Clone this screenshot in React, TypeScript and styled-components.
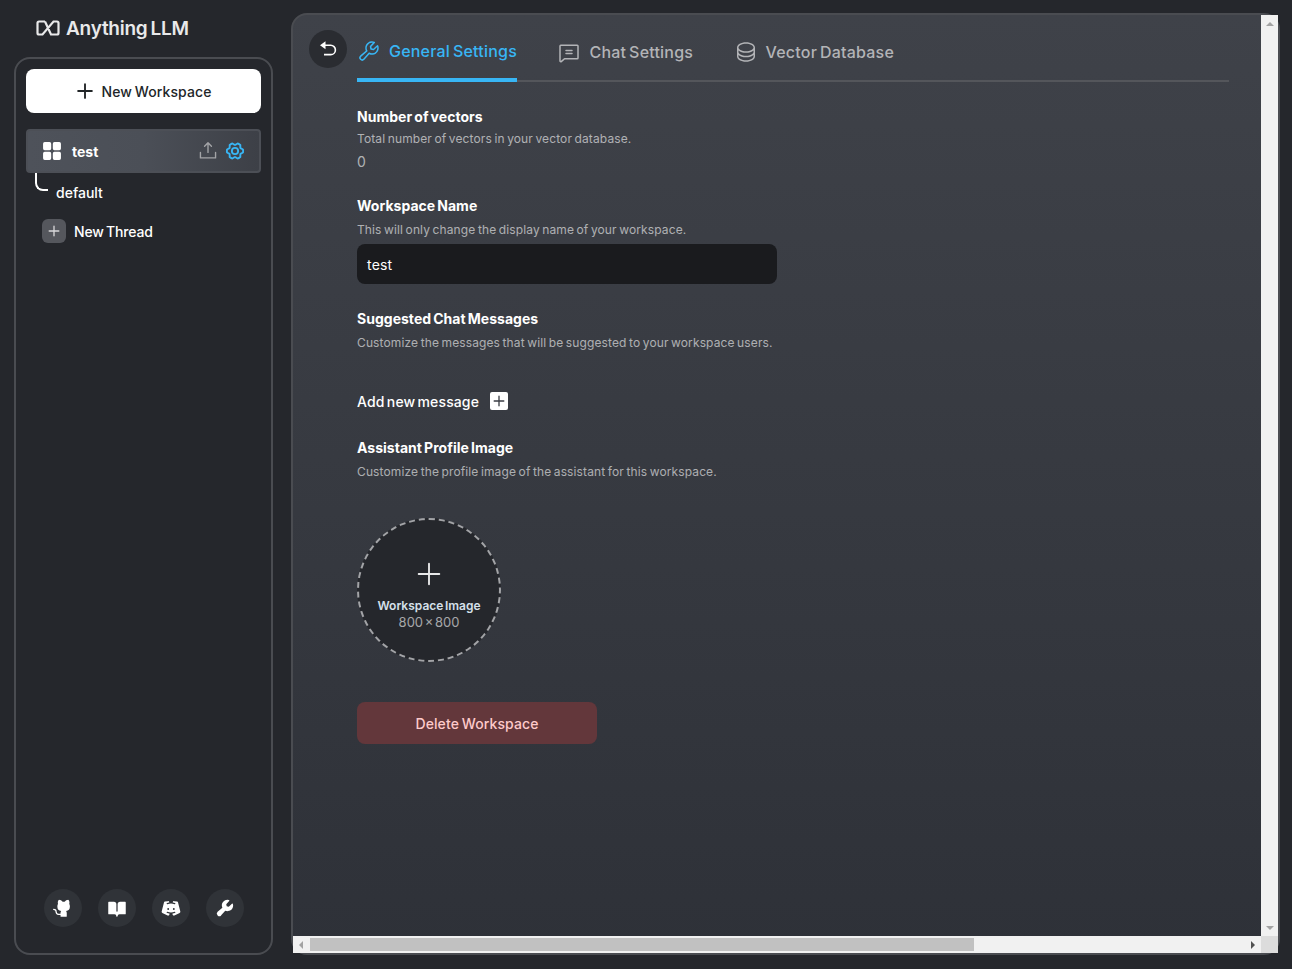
import React from "react";
import styled, { createGlobalStyle } from "styled-components";
import {
  PiBookOpenFill,
  PiChatText,
  PiDatabase,
  PiDiscordLogoFill,
  PiGearSixBold,
  PiGithubLogoFill,
  PiPlus,
  PiPlusBold,
  PiSquaresFourFill,
  PiUploadSimple,
  PiWrench,
  PiWrenchFill,
} from "react-icons/pi";

const Global = createGlobalStyle`
  * { box-sizing: border-box; }
  html, body { margin: 0; height: 100%; overflow: hidden; }
  body {
    background: #25272c;
    color: #fff;
    font-family: Inter, "Liberation Sans", sans-serif;
    word-spacing: -1.5px;
  }
`;

const Page = styled.div`
  display: flex;
  width: 1292px;
  height: 969px;
  padding: 13px 12px 14px 14px;
`;

const SideColumn = styled.aside`
  display: flex;
  flex-direction: column;
  width: 259px;
  flex-shrink: 0;
`;

const Brand = styled.div`
  display: flex;
  align-items: center;
  gap: 6px;
  height: 30px;
  margin-left: 22px;
  font-size: 19px;
  font-weight: 600;
  letter-spacing: -0.25px;
  color: #e9e9ea;
`;

const SidePanel = styled.div`
  display: flex;
  flex-direction: column;
  flex: 1;
  margin-top: 14px;
  padding: 10px 10px 26px;
  border: 2px solid #4a4c51;
  border-radius: 16px;
`;

const NewWorkspaceButton = styled.button`
  display: flex;
  align-items: center;
  justify-content: center;
  gap: 6px;
  height: 44px;
  border: 0;
  border-radius: 8px;
  background: #fff;
  color: #222628;
  font: 500 14px Inter, sans-serif;
  letter-spacing: 0.1px;
  word-spacing: -1px;
`;

const WorkspaceRow = styled.div`
  display: flex;
  align-items: center;
  height: 44px;
  margin-top: 16px;
  padding: 0 14px 0 11px;
  border: 2px solid #4c4f56;
  border-radius: 4px;
  background: linear-gradient(90deg, #4e525a 0%, #4b4f57 50%, #3d4047 100%);
  font-size: 14px;
  font-weight: 700;
`;

const WorkspaceName = styled.span`
  flex: 1;
  margin-left: 7px;
`;

const ThreadRow = styled.div`
  display: flex;
  align-items: center;
  height: 38px;
  margin: 0 0 2px 9px;
  font-size: 14px;
  font-weight: 500;
`;

const Connector = styled.span`
  align-self: flex-start;
  width: 13px;
  height: 18px;
  margin-right: 8px;
  border-left: 2px solid #fff;
  border-bottom: 2px solid #fff;
  border-bottom-left-radius: 8px;
`;

const NewThreadRow = styled.div`
  display: flex;
  align-items: center;
  gap: 8px;
  margin: 6px 0 0 16px;
  font-size: 14px;
  font-weight: 500;
  letter-spacing: -0.12px;
`;

const ThreadPlus = styled.span`
  display: flex;
  align-items: center;
  justify-content: center;
  width: 24px;
  height: 24px;
  border-radius: 6px;
  background: #55575d;
  color: #d8d8da;
`;

const Footer = styled.div`
  display: flex;
  justify-content: center;
  gap: 16px;
  margin-top: auto;
`;

const FooterIcon = styled.span`
  display: flex;
  align-items: center;
  justify-content: center;
  width: 38px;
  height: 38px;
  border-radius: 50%;
  background: #303338;
  color: #fff;
`;

const MainPanel = styled.main`
  position: relative;
  display: grid;
  grid-template-columns: minmax(0, 1fr) 17px;
  grid-template-rows: minmax(0, 1fr) 17px;
  flex: 1;
  margin-left: 18px;
  border: 2px solid #4a4c51;
  border-radius: 16px;
  background: linear-gradient(180deg, #3f4249 0%, #2e3138 100%);
`;

const Content = styled.div`
  padding: 0 32px 0 64px;
  overflow: hidden;
`;

const BackButton = styled.span`
  position: absolute;
  top: 15px;
  left: 16px;
  display: flex;
  align-items: center;
  justify-content: center;
  width: 38px;
  height: 38px;
  border-radius: 50%;
  background: #2a2c31;
  color: #fff;
`;

const Tabs = styled.nav`
  display: flex;
  gap: 40.5px;
  height: 67px;
  border-bottom: 2px solid #54565b;
`;

const Tab = styled.div<{ $active?: boolean }>`
  display: flex;
  align-items: center;
  gap: 8px;
  height: 67px;
  padding-top: ${(p) => (p.$active ? 8 : 10)}px;
  border-bottom: 4px solid ${(p) => (p.$active ? "#38b6f5" : "transparent")};
  color: ${(p) => (p.$active ? "#38b6f5" : "#b3b4b7")};
  font-size: 16px;
  font-weight: 500;
  letter-spacing: 0.2px;
`;

const Label = styled.h3<{ $top: number }>`
  margin: ${(p) => p.$top}px 0 0;
  font-size: 14px;
  line-height: 20px;
  font-weight: 700;
  letter-spacing: 0.02px;
  word-spacing: -1.2px;
  color: #fff;
`;

const Hint = styled.p<{ $top?: number }>`
  margin: ${(p) => p.$top ?? 6}px 0 0;
  font-size: 12px;
  line-height: 16px;
  letter-spacing: 0.12px;
  word-spacing: -1px;
  color: #ffffff99;
`;

const Value = styled.div`
  margin-top: 5px;
  font-size: 14px;
  line-height: 20px;
  color: #ffffff99;
`;

const NameInput = styled.div`
  display: flex;
  align-items: center;
  width: 420px;
  height: 40px;
  margin-top: 6px;
  padding: 0 10px;
  border-radius: 8px;
  background: #1a1b1e;
  font-size: 14px;
  letter-spacing: 0.2px;
`;

const AddMessage = styled.div`
  display: flex;
  align-items: center;
  gap: 11px;
  height: 20px;
  margin-top: 40px;
  font-size: 14px;
  font-weight: 500;
  letter-spacing: 0.12px;
`;

const AddBox = styled.span`
  display: flex;
  align-items: center;
  justify-content: center;
  width: 18px;
  height: 18px;
  border-radius: 2px;
  background: #fff;
  color: #3a3d44;
`;

const ImageDrop = styled.div`
  display: flex;
  flex-direction: column;
  align-items: center;
  width: 144px;
  height: 144px;
  margin-top: 38px;
  padding-top: 39px;
  border: 2px dashed #a3a4a7;
  border-radius: 50%;
  background: #25272c;
`;

const DropTitle = styled.span`
  margin-top: 9px;
  font-size: 12px;
  line-height: 16px;
  font-weight: 600;
  color: #d5e0ea;
`;

const DropSize = styled.span`
  font-size: 13px;
  line-height: 16px;
  word-spacing: -2px;
  color: #ffffff99;
`;

const DeleteButton = styled.button`
  display: block;
  width: 240px;
  height: 42px;
  margin-top: 40px;
  border: 0;
  border-radius: 8px;
  background: #63373b;
  color: #fecaca;
  font: 500 14px Inter, sans-serif;
  letter-spacing: 0.1px;
  word-spacing: -1px;
`;

const VTrack = styled.div`
  display: flex;
  flex-direction: column;
  align-items: center;
  justify-content: space-between;
  padding: 7px 0 6px;
  background: #f1f1f1;
`;

const HTrack = styled.div`
  display: flex;
  align-items: center;
  padding: 0 6px;
  background: #f1f1f1;
`;

const Thumb = styled.div`
  width: 664px;
  height: 13px;
  margin-left: 7px;
  background: #c1c1c1;
`;

const Corner = styled.div`
  background: #dcdcdc;
`;

const ArrowUp = styled.span<{ $down?: boolean }>`
  width: 0;
  height: 0;
  border-left: 4px solid transparent;
  border-right: 4px solid transparent;
  ${(p) =>
    p.$down
      ? "border-top: 4px solid #a3a3a3;"
      : "border-bottom: 4px solid #a3a3a3;"}
`;

const ArrowSide = styled.span<{ $right?: boolean }>`
  width: 0;
  height: 0;
  border-top: 4px solid transparent;
  border-bottom: 4px solid transparent;
  ${(p) =>
    p.$right
      ? "margin-left: auto; border-left: 4px solid #505050;"
      : "border-right: 4px solid #a3a3a3;"}
`;

const LogoMark = () => (
  <svg width="24" height="16" viewBox="0 0 24 16" fill="none" stroke="#e9e9ea" strokeWidth="2.2">
    <path d="M9 1.5H3Q1.5 1.5 1.5 3v10Q1.5 14.5 3 14.5H6.5L17.5 1.5H21Q22.5 1.5 22.5 3v10q0 1.5-1.5 1.5H15L9 1.5" />
  </svg>
);

const BackIcon = () => (
  <svg width="18" height="16" viewBox="0 0 18 16" fill="none">
    <path d="M1 4.2 6.5 0.2V8.2Z" fill="#fff" />
    <path d="M5 4.2h6.7a4.7 4.7 0 0 1 0 9.4H5" stroke="#fff" strokeWidth="1.6" />
  </svg>
);

export default function App() {
  return (
    <Page>
      <Global />
      <SideColumn>
        <Brand>
          <LogoMark />
          <span>Anything LLM</span>
        </Brand>
        <SidePanel>
          <NewWorkspaceButton>
            <PiPlusBold size={20} />
            <span>New Workspace</span>
          </NewWorkspaceButton>
          <WorkspaceRow>
            <PiSquaresFourFill size={26} />
            <WorkspaceName>test</WorkspaceName>
            <PiUploadSimple size={22} color="#a3a4a7" />
            <PiGearSixBold size={20} color="#38b6f5" style={{ marginLeft: 6 }} />
          </WorkspaceRow>
          <ThreadRow>
            <Connector />
            <span>default</span>
          </ThreadRow>
          <NewThreadRow>
            <ThreadPlus>
              <PiPlusBold size={14} />
            </ThreadPlus>
            <span>New Thread</span>
          </NewThreadRow>
          <Footer>
            <FooterIcon><PiGithubLogoFill size={20} /></FooterIcon>
            <FooterIcon><PiBookOpenFill size={20} /></FooterIcon>
            <FooterIcon><PiDiscordLogoFill size={20} /></FooterIcon>
            <FooterIcon><PiWrenchFill size={20} /></FooterIcon>
          </Footer>
        </SidePanel>
      </SideColumn>
      <MainPanel>
        <BackButton>
          <BackIcon />
        </BackButton>
        <Content>
          <Tabs>
            <Tab $active>
              <PiWrench size={24} />
              <span>General Settings</span>
            </Tab>
            <Tab>
              <PiChatText size={24} />
              <span>Chat Settings</span>
            </Tab>
            <Tab>
              <PiDatabase size={24} />
              <span>Vector Database</span>
            </Tab>
          </Tabs>
          <Label $top={25}>Number of vectors</Label>
          <Hint $top={4}>Total number of vectors in your vector database.</Hint>
          <Value>0</Value>
          <Label $top={24}>Workspace Name</Label>
          <Hint>This will only change the display name of your workspace.</Hint>
          <NameInput>test</NameInput>
          <Label $top={25}>Suggested Chat Messages</Label>
          <Hint>Customize the messages that will be suggested to your workspace users.</Hint>
          <AddMessage>
            <span>Add new message</span>
            <AddBox><PiPlusBold size={14} /></AddBox>
          </AddMessage>
          <Label $top={27}>Assistant Profile Image</Label>
          <Hint>Customize the profile image of the assistant for this workspace.</Hint>
          <ImageDrop>
            <PiPlus size={30} color="#e8e8e9" />
            <DropTitle>Workspace Image</DropTitle>
            <DropSize>800 x 800</DropSize>
          </ImageDrop>
          <DeleteButton>Delete Workspace</DeleteButton>
        </Content>
        <VTrack>
          <ArrowUp />
          <ArrowUp $down />
        </VTrack>
        <HTrack>
          <ArrowSide />
          <Thumb />
          <ArrowSide $right />
        </HTrack>
        <Corner />
      </MainPanel>
    </Page>
  );
}
